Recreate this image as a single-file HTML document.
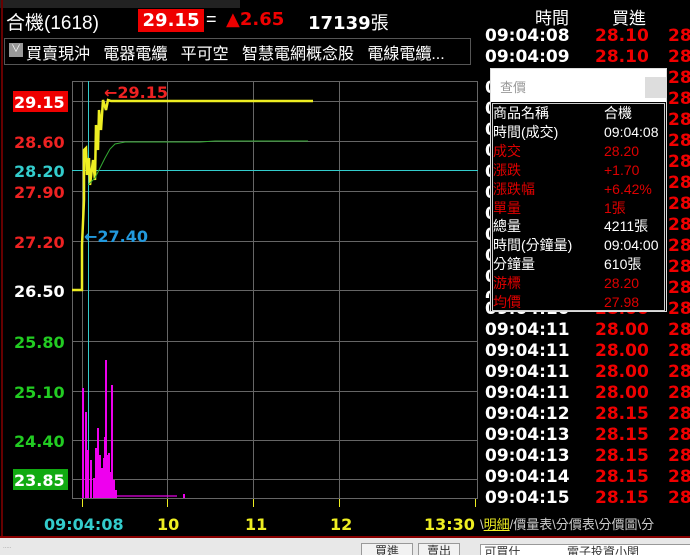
<!DOCTYPE html>
<html style="height:555px;overflow:hidden"><head><meta charset="utf-8"><style>
body{margin:0;width:690px;height:555px;background:#000;overflow:hidden;position:relative;font-family:"Liberation Sans","Noto Sans CJK TC",sans-serif;}
.a{position:absolute;white-space:nowrap;}
.n{font-family:"DejaVu Sans",sans-serif;font-weight:bold;}
.t{color:#fff;font-size:17px;left:485px;}
.p{color:#e00;font-size:17px;left:595px;}
.q{color:#e00;font-size:17px;left:668px;}
.pr{position:absolute;left:2px;width:172px;font-size:14px;line-height:18.9px;height:18.9px;}
.pr span{position:absolute;left:111px;}
</style></head><body>
<div class="a" style="left:0;top:0;width:240px;height:8px;background:#222"></div>
<div class="a" style="left:1px;top:0;width:2px;height:538px;background:#600"></div>
<div class="a" style="left:6px;top:8px;font-size:19px;color:#fff;">合機(1618)</div>
<div class="a n" style="left:138px;top:9px;width:66px;height:23px;background:#e00;color:#fff;font-size:18px;line-height:23px;text-align:center">29.15</div>
<div class="a" style="left:206px;top:9px;color:#fff;font-size:18px">=</div>
<div class="a n" style="left:226px;top:9px;color:#e00;font-size:18px">▲2.65</div>
<div class="a n" style="left:308px;top:9px;color:#fff;font-size:18px">17139<span style="font-weight:normal;font-family:'Noto Sans CJK TC'">張</span></div>
<div class="a" style="left:4px;top:38px;width:465px;height:25px;border:1px solid #555;"></div>
<div class="a" style="left:9px;top:43px;width:14px;height:14px;background:#999;color:#fff;font-size:10px;text-align:center;line-height:14px">∨</div>
<div class="a" style="left:26px;top:40px;color:#fff;font-size:16px;">買賣現沖&nbsp;&nbsp;&nbsp;電器電纜&nbsp;&nbsp;&nbsp;平可空&nbsp;&nbsp;&nbsp;智慧電網概念股&nbsp;&nbsp;&nbsp;電線電纜...</div>

<svg class="a" style="left:0;top:0" width="480" height="536">
<g stroke="#666" stroke-width="1" fill="none">
<rect x="72.5" y="81.5" width="405" height="417"/>
<line x1="72" y1="101.5" x2="478" y2="101.5"/><line x1="72" y1="141.5" x2="478" y2="141.5"/>
<line x1="72" y1="191.5" x2="478" y2="191.5"/><line x1="72" y1="241.5" x2="478" y2="241.5"/>
<line x1="72" y1="290.5" x2="478" y2="290.5"/><line x1="72" y1="341.5" x2="478" y2="341.5"/>
<line x1="72" y1="391.5" x2="478" y2="391.5"/><line x1="72" y1="440.5" x2="478" y2="440.5"/>
<line x1="72" y1="479.5" x2="478" y2="479.5"/>
<line x1="167.5" y1="81" x2="167.5" y2="498"/><line x1="253.5" y1="81" x2="253.5" y2="498"/>
<line x1="339.5" y1="81" x2="339.5" y2="498"/><line x1="82.5" y1="81" x2="82.5" y2="498"/>
</g>
<line x1="72" y1="170.5" x2="478" y2="170.5" stroke="#3cc" stroke-width="1"/>
<line x1="88.5" y1="81" x2="88.5" y2="498" stroke="#3cc" stroke-width="1"/>
<g fill="#e0e">
<rect x="82" y="388" width="2" height="110"/><rect x="85" y="412" width="2" height="86"/><rect x="87" y="450" width="2" height="48"/>
<rect x="90" y="460" width="2" height="38"/><rect x="93" y="478" width="2" height="20"/><rect x="95" y="448" width="2" height="50"/>
<rect x="97" y="428" width="2" height="70"/><rect x="99" y="455" width="2" height="43"/><rect x="101" y="468" width="2" height="30"/>
<rect x="103" y="458" width="2" height="40"/><rect x="104" y="437" width="2" height="61"/><rect x="105" y="360" width="2" height="138"/>
<rect x="107" y="455" width="2" height="43"/><rect x="108" y="453" width="2" height="45"/><rect x="110" y="472" width="2" height="26"/>
<rect x="111" y="385" width="2" height="113"/><rect x="113" y="480" width="2" height="18"/><rect x="115" y="490" width="2" height="8"/>
<rect x="117" y="495" width="60" height="2" opacity="0.6"/><rect x="183" y="494" width="2" height="4"/>
</g>
<polyline fill="none" stroke="#ee2" stroke-width="2.5" points="72,290 82,290 82,245 84,200 84,150 86,148 87,175 89,158 90,185 93,160 95,180 96,125 98,150 99,110 101,130 103,100 106,110 108,100 111,101 313,101"/>
<polyline fill="none" stroke="#3a3" stroke-width="1" points="88,185 95,178 100,168 105,158 110,149 115,144 125,142 200,142 215,141 308,141"/>
<g font-family="DejaVu Sans" font-weight="bold" font-size="16">
<rect x="13" y="91" width="55" height="21" fill="#e00"/>
<text x="14" y="108" fill="#fff">29.15</text>
<text x="14" y="148" fill="#e22">28.60</text>
<text x="14" y="177" fill="#3cc">28.20</text>
<text x="14" y="198" fill="#e22">27.90</text>
<text x="14" y="248" fill="#e22">27.20</text>
<text x="14" y="297" fill="#fff">26.50</text>
<text x="14" y="348" fill="#2c2">25.80</text>
<text x="14" y="398" fill="#2c2">25.10</text>
<text x="14" y="447" fill="#2c2">24.40</text>
<rect x="13" y="469" width="55" height="21" fill="#1a1"/>
<text x="14" y="486" fill="#fff">23.85</text>
<text x="104" y="98" fill="#e22">←29.15</text>
<text x="84" y="242" fill="#29d">←27.40</text>
<text x="44" y="530" fill="#3cc">09:04:08</text>
<text x="157" y="530" fill="#ee2">10</text>
<text x="245" y="530" fill="#ee2">11</text>
<text x="330" y="530" fill="#ee2">12</text>
<text x="424" y="530" fill="#ee2">13:30</text>
</g>
<g stroke="#ee2"><line x1="82.5" y1="499" x2="82.5" y2="507"/><line x1="167.5" y1="499" x2="167.5" y2="507"/><line x1="253.5" y1="499" x2="253.5" y2="507"/><line x1="339.5" y1="499" x2="339.5" y2="507"/><line x1="475.5" y1="499" x2="475.5" y2="507"/></g>
</svg>

<div class="a" style="left:535px;top:4px;color:#fff;font-size:17px">時間</div>
<div class="a" style="left:612px;top:4px;color:#fff;font-size:17px">買進</div>
<div class="a n t" style="top:26px">09:04:08</div><div class="a n p" style="top:26px">28.10</div><div class="a n q" style="top:26px">28</div>
<div class="a n t" style="top:47px">09:04:09</div><div class="a n p" style="top:47px">28.10</div><div class="a n q" style="top:47px">28</div>
<div class="a n q" style="top:68px">28</div><div class="a n q" style="top:89px">28</div><div class="a n q" style="top:110px">28</div><div class="a n q" style="top:131px">28</div><div class="a n q" style="top:152px">28</div><div class="a n q" style="top:173px">28</div><div class="a n q" style="top:194px">28</div><div class="a n q" style="top:215px">28</div><div class="a n q" style="top:236px">28</div><div class="a n q" style="top:257px">28</div><div class="a n q" style="top:278px">28</div>
<div class="a n t" style="top:299px">09:04:10</div><div class="a n p" style="top:299px">28.00</div><div class="a n q" style="top:299px">28</div>
<div class="a n t" style="top:320px">09:04:11</div><div class="a n p" style="top:320px">28.00</div><div class="a n q" style="top:320px">28</div>
<div class="a n t" style="top:341px">09:04:11</div><div class="a n p" style="top:341px">28.00</div><div class="a n q" style="top:341px">28</div>
<div class="a n t" style="top:362px">09:04:11</div><div class="a n p" style="top:362px">28.00</div><div class="a n q" style="top:362px">28</div>
<div class="a n t" style="top:383px">09:04:11</div><div class="a n p" style="top:383px">28.00</div><div class="a n q" style="top:383px">28</div>
<div class="a n t" style="top:404px">09:04:12</div><div class="a n p" style="top:404px">28.15</div><div class="a n q" style="top:404px">28</div>
<div class="a n t" style="top:425px">09:04:13</div><div class="a n p" style="top:425px">28.15</div><div class="a n q" style="top:425px">28</div>
<div class="a n t" style="top:446px">09:04:13</div><div class="a n p" style="top:446px">28.15</div><div class="a n q" style="top:446px">28</div>
<div class="a n t" style="top:467px">09:04:14</div><div class="a n p" style="top:467px">28.15</div><div class="a n q" style="top:467px">28</div>
<div class="a n t" style="top:488px">09:04:15</div><div class="a n p" style="top:488px">28.15</div><div class="a n q" style="top:488px">28</div>
<div class="a" style="left:485px;top:68px;width:10px;height:230px;background:#000;overflow:hidden"><div style="color:#fff;font-size:17px;font-weight:bold;line-height:21px;padding-top:10px;font-family:'DejaVu Sans'">0<br>0<br>0<br>0<br>0<br>0<br>0<br>0<br>0<br>0<br>0</div></div>

<div class="a" style="left:490px;top:68px;width:177px;height:244px;background:#000;border:1px solid #ddd;box-sizing:border-box;overflow:hidden">
<div style="position:absolute;left:0;top:0;width:175px;height:33px;background:#fff"></div>
<div style="position:absolute;left:9px;top:8px;font-size:13px;color:#999">查價</div>
<div style="position:absolute;left:154px;top:8px;width:21px;height:21px;background:#ddd"></div>
<div style="position:absolute;left:1px;top:34px;width:173px;height:208px;border:1px solid #ccc;box-sizing:border-box"></div>
<div class="pr" style="top:35px;color:#fff">商品名稱<span>合機</span></div>
<div class="pr" style="top:53.9px;color:#fff">時間(成交)<span>09:04:08</span></div>
<div class="pr" style="top:72.8px;color:#d00">成交<span>28.20</span></div>
<div class="pr" style="top:91.7px;color:#d00">漲跌<span>+1.70</span></div>
<div class="pr" style="top:110.6px;color:#d00">漲跌幅<span>+6.42%</span></div>
<div class="pr" style="top:129.5px;color:#d00">單量<span>1張</span></div>
<div class="pr" style="top:148.4px;color:#fff">總量<span>4211張</span></div>
<div class="pr" style="top:167.3px;color:#fff">時間(分鐘量)<span>09:04:00</span></div>
<div class="pr" style="top:186.2px;color:#fff">分鐘量<span>610張</span></div>
<div class="pr" style="top:205.1px;color:#d00">游標<span>28.20</span></div>
<div class="pr" style="top:224px;color:#d00">均價<span>27.98</span></div>
</div>

<div class="a" style="left:480px;top:514px;font-size:13px;color:#ccc;">\<span style="color:#ee2;text-decoration:underline">明細</span>/價量表\分價表\分價圖\分</div>
<div class="a" style="left:0;top:536px;width:690px;height:2px;background:#800"></div>
<div class="a" style="left:0;top:538px;width:690px;height:17px;background:#e8e8e8;overflow:hidden"></div>
<div class="a" style="left:3px;top:544px;font-size:6px;color:#999">.....</div>
<div class="a" style="left:361px;top:543px;width:50px;height:12px;border:1px solid #999;border-bottom:none;background:#f2f2f2;font-size:12px;line-height:14px;text-align:center;color:#333;overflow:hidden">買進</div>
<div class="a" style="left:418px;top:543px;width:40px;height:12px;border:1px solid #999;border-bottom:none;background:#f2f2f2;font-size:12px;line-height:14px;text-align:center;color:#333;overflow:hidden">賣出</div>
<div class="a" style="left:480px;top:544px;width:210px;height:11px;border:1px solid #999;border-bottom:none;background:#fff;font-size:12px;line-height:14px;color:#333;overflow:hidden">&nbsp;可買什&nbsp;&nbsp;&nbsp;&nbsp;&nbsp;&nbsp;&nbsp;&nbsp;&nbsp;&nbsp;&nbsp;&nbsp;&nbsp;&nbsp;電子投資小閏</div>
</body></html>
